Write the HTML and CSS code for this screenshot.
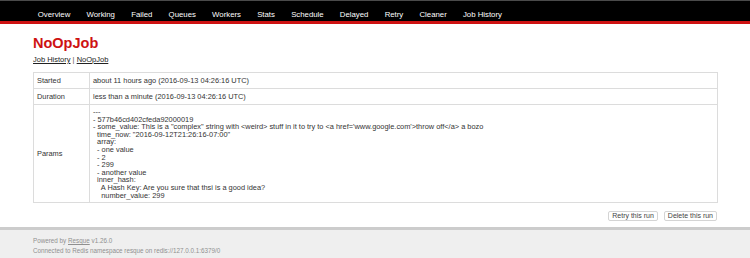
FILE: index.html
```html
<!DOCTYPE html>
<html>
<head>
<meta charset="utf-8">
<title>Resque</title>
<link rel="stylesheet" href="styles.css">
</head>
<body>
<div class="header">
  <ul class="nav">
    <li><a href="#">Overview</a></li>
    <li><a href="#">Working</a></li>
    <li><a href="#">Failed</a></li>
    <li><a href="#">Queues</a></li>
    <li><a href="#">Workers</a></li>
    <li><a href="#">Stats</a></li>
    <li><a href="#">Schedule</a></li>
    <li><a href="#">Delayed</a></li>
    <li><a href="#">Retry</a></li>
    <li><a href="#">Cleaner</a></li>
    <li><a href="#">Job History</a></li>
  </ul>
</div>
<div class="main">
  <h1 class="title">NoOpJob</h1>
  <p class="crumbs"><a href="#">Job History</a> | <a href="#">NoOpJob</a></p>
  <table class="details">
    <tr><td class="label">Started</td><td>about 11 hours ago (2016-09-13 04:26:16 UTC)</td></tr>
    <tr><td class="label">Duration</td><td>less than a minute (2016-09-13 04:26:16 UTC)</td></tr>
    <tr><td class="label">Params</td><td><div class="params">---
- 577b46cd402cfeda92000019
- some_value: This is a "complex" string with &lt;weird&gt; stuff in it to try to &lt;a href='www.google.com'&gt;throw off&lt;/a&gt; a bozo
  time_now: "2016-09-12T21:26:16-07:00"
  array:
  - one value
  - 2
  - 299
  - another value
  inner_hash:
    A Hash Key: Are you sure that thsi is a good idea?
    number_value: 299</div></td></tr>
  </table>
  <div class="actions">
    <button class="btn">Retry this run</button>
    <button class="btn">Delete this run</button>
  </div>
</div>
<div class="footer">
  <p>Powered by <a href="#">Resque</a> v1.26.0</p>
  <p>Connected to Redis namespace resque on redis://127.0.0.1:6379/0</p>
</div>
</body>
</html>
```

FILE: styles.css
```css
html {
  background: #efefef;
  font-family: "Liberation Sans", Arial, Helvetica, sans-serif;
  font-size: 7.8px;
}
body {
  margin: 0;
  padding: 0;
}
.header {
  background: #000;
  border-top: 1px solid #4a4a4a;
  border-bottom: 3px solid #ce1212;
  padding: 0 33px;
}
.nav {
  display: flex;
  margin: 0;
  padding: 9px 0 1px 0;
  list-style: none;
  line-height: 10px;
}
.nav a {
  color: #fff;
  text-decoration: none;
  padding: 0 4.8px;
  margin-right: 6.6px;
  display: block;
}
.main {
  background: #fff;
  padding: 6px 32px 6px 33px;
  display: flex;
  flex-direction: column;
}
.title {
  margin: 5px 0 3px;
  font-size: 14.5px;
  line-height: 17px;
  font-weight: bold;
  color: #ce1212;
}
.crumbs {
  margin: 0;
  font-size: 7.5px;
  line-height: 9px;
  color: #555;
}
.crumbs a {
  color: #222;
}
.details {
  width: 100%;
  margin: 8px 0 0;
  border-collapse: collapse;
  color: #333;
  font-size: 7.4px;
}
.details td {
  border: 1px solid #dcdcdc;
  padding: 3px 3px;
  line-height: 9px;
  vertical-align: middle;
  text-align: left;
}
.details td.label {
  width: 49px;
}
.params {
  white-space: pre;
  line-height: 7.6px;
}
.actions {
  display: flex;
  justify-content: flex-end;
  gap: 6px;
  margin-top: 8px;
  padding-right: 1px;
}
.btn {
  font-family: "Liberation Sans", Arial, sans-serif;
  font-size: 7px;
  color: #444;
  background: #fff;
  border: 1px solid #d4d4d4;
  border-radius: 2px;
  padding: 0 3px;
  height: 10px;
  line-height: 8px;
  margin: 0;
}
.footer {
  border-top: 3px solid #ccc;
  background: #efefef;
  padding: 6px 33px;
  color: #8f8f8f;
  font-size: 6.3px;
  line-height: 9.5px;
}
.footer p {
  margin: 0;
}
.footer a {
  color: #8f8f8f;
}
```
